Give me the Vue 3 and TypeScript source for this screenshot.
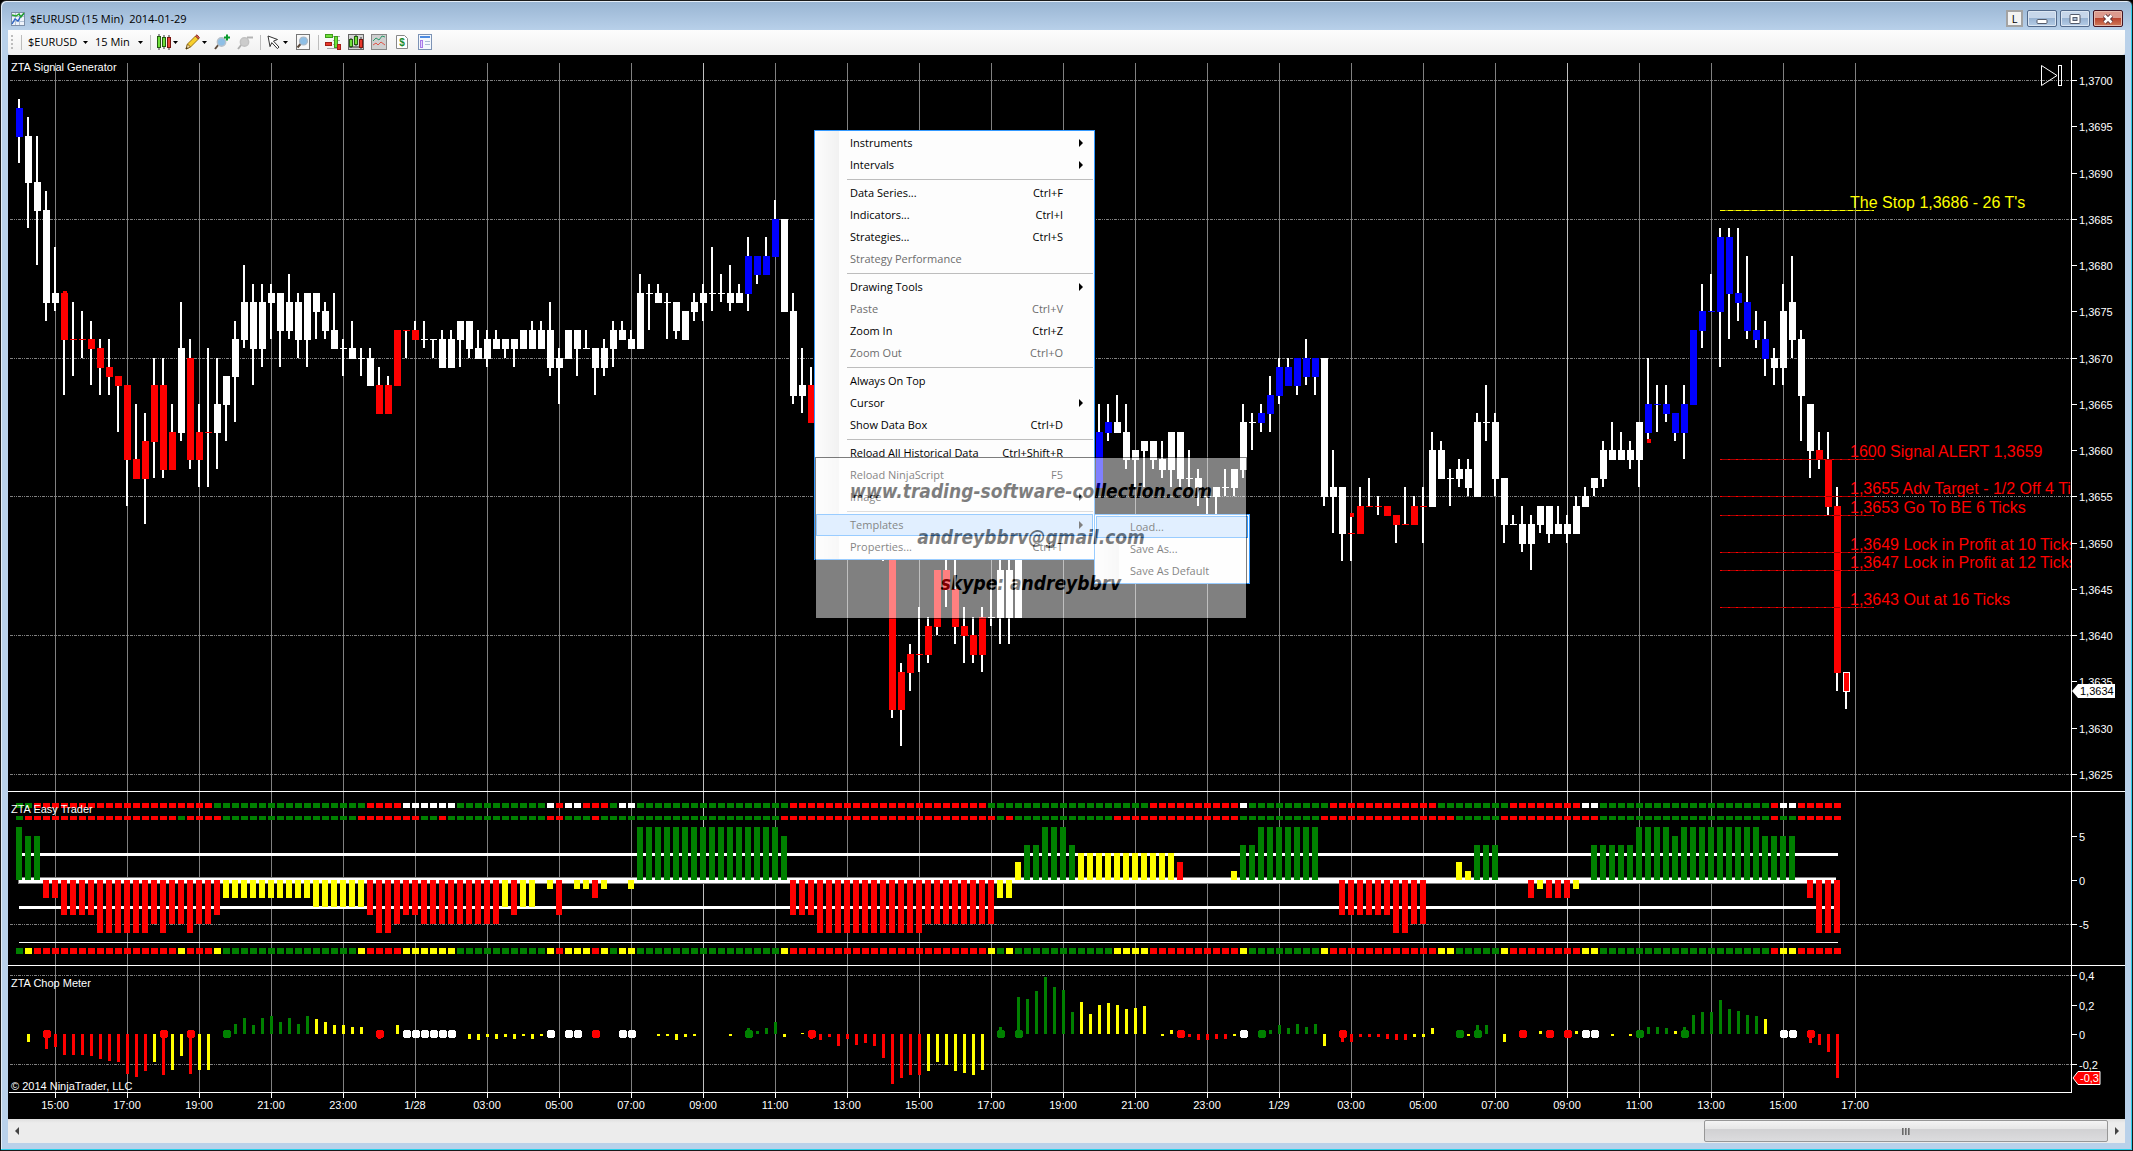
<script setup lang="ts">
import { ref } from 'vue'

type Tone = 'g' | 'r' | 'y' | 'w' | 'b'

interface Candle { x: number; tone: Tone; high: number; top: number; bottom: number; low: number }
interface Bar { x: number; tone: Tone; v: number; dot: boolean }
interface MenuItem { label: string; keys?: string; sub?: boolean; off?: boolean; hot?: boolean; id?: string }

const PITCH = 9
const priceY = (ticks: number): number => Math.round(80 + ticks * 9.25)

/* colour, high, body top, body bottom, low, counted in ticks below 1,3700; "@n" jumps to bar n */
const candleSource = `
b 2 3 6 9|w 4 6 11 16|w 6 11 14 20|w 12 14 24 26|w 18 23 24 25|r 23 23 28 34|r 24 28 28 32|r 25 28 28 30|
r 26 28 29 33|r 28 29 31 34|r 28 31 32 34|r 32 32 33 38|r 33 33 41 46|r 35 41 43 43|r 36 39 43 48|r 30 33 39 43|
r 30 33 42 43|r 35 38 42 42|w 24 29 38 39|r 28 30 41 42|r 35 38 41 44|r 29 38 38 44|w 30 35 38 42|w 32 32 35 39|
w 26 28 32 37|w 20 24 28 29|w 22 24 29 33|w 22 24 29 31|w 22 23 24 28|w 23 23 27 31|w 21 24 27 28|w 23 24 28 30|
w 23 23 28 31|w 23 23 25 28|w 24 25 27 28|w 23 27 29 29|w 28 29 29 32|w 26 29 30 30|w 29 30 30 32|w 29 30 33 33|
r 31 33 36 36|r 32 33 36 36|r 27 27 33 33|r 27 27 27 30|r 26 27 28 28|w 26 28 28 29|w 28 28 28 30|w 27 28 31 31|
w 27 28 31 31|w 26 26 28 31|w 26 26 29 30|w 27 29 30 30|w 27 28 30 31|w 27 28 29 29|w 28 28 29 30|w 28 28 29 31|
w 27 27 29 29|w 26 27 29 29|w 26 27 29 29|w 24 27 31 32|w 29 30 31 35|w 27 27 30 30|w 27 27 29 32|w 27 29 29 29|
w 29 29 31 34|w 28 29 31 32|w 26 27 29 31|w 26 27 28 28|w 27 28 29 29|w 21 23 29 29|w 22 23 23 27|w 22 23 24 24|
w 23 24 24 28|w 24 24 27 28|w 25 25 28 28|w 23 24 25 26|w 22 23 24 26|w 18 23 23 25|w 21 23 23 24|w 20 23 24 25|
w 22 23 24 24|b 17 19 23 25|b 19 19 21 22|b 17 19 21 21|b 13 15 19 19|w 15 15 25 25|w 23 25 34 35|w 29 33 34 36|
r 31 33 37 37|@96|w 50 50 50 52|r 48 48 68 69|r 63 64 68 72|r 61 62 64 66|r 57 62 62 64|r 58 59 62 63|
r 53 53 59 60|r 50 53 55 57|r 50 55 59 61|r 57 59 60 63|r 58 60 62 63|r 57 58 62 64|w 55 58 58 59|w 50 53 58 61|
w 50 53 58 61|w 48 48 58 58|@120|b 35 38 44 44|b 35 37 38 39|w 34 37 38 38|w 35 38 41 42|w 40 40 41 44|
w 39 39 40 44|w 39 39 41 42|w 39 41 42 43|w 38 38 42 44|w 38 38 43 44|w 40 43 43 44|w 42 43 44 46|w 45 45 45 48|
w 44 44 45 48|w 42 44 44 45|w 42 42 44 45|w 35 37 42 43|w 36 37 37 40|b 35 36 37 38|b 32 34 36 38|b 30 31 34 35|
b 30 31 33 33|b 30 30 33 34|b 28 30 32 33|b 30 30 32 34|w 30 30 45 46|w 40 44 45 49|w 44 44 49 52|r 47 49 49 52|
r 44 46 49 49|r 43 46 46 46|r 45 46 46 47|r 46 46 47 47|r 47 47 48 50|r 44 48 48 48|r 45 46 48 48|r 44 46 46 50|
w 38 40 46 46|w 39 40 43 43|w 42 43 43 46|w 41 42 43 44|w 41 42 44 45|w 36 37 45 45|w 33 37 37 39|w 36 37 43 45|
w 43 43 48 50|w 47 48 48 48|w 46 48 50 51|w 47 48 50 53|w 46 46 48 49|w 46 46 49 50|w 46 48 49 49|w 47 48 49 50|
w 45 46 49 49|w 44 45 46 46|w 43 43 44 45|w 39 40 43 44|w 37 40 41 41|w 38 40 41 41|w 39 40 41 42|w 37 37 41 44|
b 30 35 38 39|b 33 35 35 38|b 33 35 36 37|b 36 36 38 39|b 33 35 38 41|b 27 27 35 35|b 22 25 27 29|b 21 25 25 25|
b 16 17 25 31|b 16 17 23 28|b 16 23 24 26|b 19 24 27 28|b 25 27 28 29|b 26 28 30 32|w 29 30 31 33|w 22 25 31 33|
w 19 24 28 30|w 27 28 34 39|w 35 35 40 43|r 38 40 41 42|r 38 41 46 47|r 44 46 64 66|r 64 64 66 68`

function walk(source: string, each: (entry: string[], index: number) => void): void {
  let i = 0
  for (const raw of source.split('|')) {
    const entry = raw.trim()
    if (!entry) continue
    if (entry.startsWith('@')) { i = Number(entry.slice(1)); continue }
    each(entry.split(' '), i)
    i++
  }
}

const candles: Candle[] = []
walk(candleSource, (e, i) => {
  const [high, top, bottom, low] = e.slice(1).map(n => priceY(Number(n)))
  candles.push({ x: 19 + PITCH * i, tone: e[0] as Tone, high, top, bottom, low })
})
const lastCandle = candles[candles.length - 1]

const markers = [{ x: 63, y: 291 }, { x: 1350, y: 513 }, { x: 1647, y: 439 }]

/* run-length rows: tone followed by count */
function runs(source: string): { x: number; tone: Tone }[] {
  const out: { x: number; tone: Tone }[] = []
  for (const part of source.split(' ')) {
    const count = Number(part.slice(1))
    for (let k = 0; k < count; k++) out.push({ x: 16 + PITCH * out.length, tone: part[0] as Tone })
  }
  return out
}
const strips = [
  { y: 803, h: 5, cells: runs('g2 r20 g17 r4 w6 g10 w1 r1 w2 r3 g1 w2 g17 r22 g18 r10 w1 g9 r12 g8 r8 w2 g19 r1 w2 r5') },
  { y: 816, h: 4, cells: runs('g1 r17 g1 r4 g15 r7 g2 r1 g11 r2 g3 r1 g20 r24 g1 r1 g11 r14 g9 r15 g5 r11 g19 r1 g2 r5') },
  { y: 948, h: 6, cells: runs('g1 y1 r16 y1 r3 y1 g15 y1 r4 y6 g10 y1 r1 y3 r1 y1 g1 y2 g16 y1 r22 y1 g1 y1 g11 y4 r10 y1 g8 y1 r12 y2 g5 y1 r8 y2 g19 r1 y2 r5') },
]

/* first bar, tone, value, repeat */
const trendRuns: [number, Tone, number, number][] = [
  [0, 'g', 6, 1], [1, 'g', 5, 2], [3, 'r', -2, 2], [5, 'r', -4, 4], [9, 'r', -6, 6], [15, 'r', -5, 1], [16, 'r', -6, 1],
  [17, 'r', -5, 2], [19, 'r', -6, 1], [20, 'r', -5, 2], [22, 'r', -4, 1], [23, 'y', -2, 10], [33, 'y', -3, 6],
  [39, 'r', -4, 1], [40, 'r', -6, 2], [42, 'r', -5, 1], [43, 'r', -4, 2], [45, 'r', -5, 9], [54, 'y', -3, 1],
  [55, 'r', -4, 1], [56, 'y', -3, 2], [59, 'y', -1, 1], [60, 'r', -4, 1], [62, 'y', -1, 2], [64, 'r', -2, 1],
  [65, 'y', -1, 1], [68, 'y', -1, 1], [69, 'g', 6, 16], [85, 'g', 5, 1], [86, 'r', -4, 3], [89, 'r', -6, 12],
  [101, 'r', -5, 8], [109, 'y', -2, 2], [111, 'y', 2, 1], [112, 'g', 4, 2], [114, 'g', 6, 3], [117, 'g', 4, 1],
  [118, 'y', 3, 11], [129, 'r', 2, 1], [135, 'y', 1, 1], [136, 'g', 4, 2], [138, 'g', 6, 7], [147, 'r', -4, 6],
  [153, 'r', -6, 2], [155, 'r', -5, 2], [160, 'y', 2, 1], [161, 'y', 1, 1], [162, 'g', 4, 3], [168, 'r', -2, 1],
  [169, 'y', -1, 1], [170, 'r', -2, 3], [173, 'y', -1, 1], [175, 'g', 4, 5], [180, 'g', 6, 4], [184, 'g', 5, 1],
  [185, 'g', 6, 9], [194, 'g', 5, 4], [199, 'r', -2, 1], [200, 'r', -6, 3],
]
const trendBars = trendRuns.flatMap(([from, tone, v, n]) =>
  Array.from({ length: n }, (_, k) => {
    const h = Math.round(Math.abs(v) * 8.85)
    return { x: 16 + PITCH * (from + k), tone, y: v > 0 ? 880 - h : 880, h }
  }),
)

/* tone and height of each chop bar; a trailing "o" puts a dot on the zero line */
const chopSource = `@1|y -8|@3|r -15 o|r -13|r -21|r -21|r -21|r -22|r -25|r -27|r -28|r -40|r -43|r -37|y -28|r -41 o|y -36|y -22|
r -40 o|y -36|y -36|@23|g 0 o|g 10|g 16|g 9|g 16|g 18|g 12|g 16|g 10|g 18|y 15|y 12|y 9|y 9|y 7|y 7|@40|r -5 o|@42|y 9|
w 0 o|w 0 o|w 0 o|w 0 o|w 0 o|w 0 o|@50|y -5|y -6|y -3|y -5|y -3|y -5|y -2|y -5|y -2|w 0 o|@61|w 0 o|w 0 o|@64|r 0 o|
@67|w 0 o|w 0 o|@71|y -2|y -2|y -6|y -3|y -2|@79|y -2|@81|g 6 o|g 3|g 6|g 12|y -3|@87|y 1|r -5 o|r -6|r -3|r -12|r -5|r -11|
r -9|r -12|r -24|r -50|r -44|r -41|r -41|y -37|y -28|y -31|y -37|y -39|y -41|y -36|@109|g 7 o|@111|g 37 o|g 35|g 43|g 57|
g 47|g 44|g 22|y 32|y 20|y 29|y 31|y 29|y 25|y 26|y 28|@127|y -2|y 4|r 0 o|r -3|r -6|r -6|r -5|r -5|y -2|w 0 o|@138|g 0 o|
g 4|g 9|g 6|g 10|g 7|g 10|y -12|@147|r -8 o|r -8|r -3|r -3|r -3|r -5|r -6|r -6|y -3|y -3|y 6|@160|g 0 o|y -2|g 9 o|g 9|
@165|y -8|@167|r 0 o|@169|y 3|r 0 o|@172|r 0 o|y 3|w 0 o|w 0 o|@177|y -2|@179|y -2|g 0 o|g 7|g 7|g 6|y 3|g 7 o|g 19|g 22|
g 22|g 34|g 25|g 23|g 19|g 18|y 15|@196|w 0 o|w 0 o|@199|r -9 o|r -11|r -18|r -44`
const chopBars: Bar[] = []
walk(chopSource, (e, i) => {
  chopBars.push({ x: 18 + PITCH * i, tone: e[0] as Tone, v: Number(e[1]), dot: e[2] === 'o' })
})

const hours = ['15:00', '17:00', '19:00', '21:00', '23:00', '1/28', '03:00', '05:00', '07:00', '09:00', '11:00', '13:00',
  '15:00', '17:00', '19:00', '21:00', '23:00', '1/29', '03:00', '05:00', '07:00', '09:00', '11:00', '13:00', '15:00', '17:00']
  .map((text, k) => ({ text, x: 55 + 72 * k, bright: text === '09:00' }))

const prices = Array.from({ length: 16 }, (_, k) => ({ text: `1,${3700 - 5 * k}`, y: priceY(5 * k), line: k % 3 === 0 }))
const scales = [
  { text: '5', y: 836 }, { text: '0', y: 880 }, { text: '-5', y: 924, line: true },
  { text: '0,4', y: 975, line: true }, { text: '0,2', y: 1005 }, { text: '0', y: 1034 }, { text: '-0,2', y: 1064, line: true },
]

const alerts = [
  { text: "The Stop 1,3686 - 26 T's", y: 210, tone: 'y' },
  { text: '1600 Signal ALERT 1,3659', y: 459, tone: 'r' },
  { text: '1,3655 Adv Target - 1/2 Off 4 Ticks', y: 496, tone: 'r' },
  { text: '1,3653 Go To BE 6 Ticks', y: 515, tone: 'r' },
  { text: '1,3649 Lock in Profit at 10 Ticks', y: 552, tone: 'r' },
  { text: '1,3647 Lock in Profit at 12 Ticks', y: 570, tone: 'r' },
  { text: '1,3643 Out at 16 Ticks', y: 607, tone: 'r' },
]

const menu: MenuItem[][] = [
  [{ label: 'Instruments', sub: true }, { label: 'Intervals', sub: true }],
  [{ label: 'Data Series...', keys: 'Ctrl+F' }, { label: 'Indicators...', keys: 'Ctrl+I' },
    { label: 'Strategies...', keys: 'Ctrl+S' }, { label: 'Strategy Performance', off: true }],
  [{ label: 'Drawing Tools', sub: true }, { label: 'Paste', keys: 'Ctrl+V', off: true },
    { label: 'Zoom In', keys: 'Ctrl+Z' }, { label: 'Zoom Out', keys: 'Ctrl+O', off: true }],
  [{ label: 'Always On Top' }, { label: 'Cursor', sub: true }, { label: 'Show Data Box', keys: 'Ctrl+D' }],
  [{ label: 'Reload All Historical Data', keys: 'Ctrl+Shift+R' }, { label: 'Reload NinjaScript', keys: 'F5' },
    { label: 'Image', sub: true }],
  [{ label: 'Templates', sub: true, hot: true }, { label: 'Properties...', keys: 'Ctrl+T' }],
]
const templateMenu: MenuItem[] = [{ label: 'Load...', hot: true }, { label: 'Save As...' }, { label: 'Save As Default' }]

const instrument = ref('$EURUSD')
const interval = ref('15 Min')
</script>

<template>
  <div class="window">
    <header class="titlebar">
      <svg class="app-icon" width="14" height="14" viewBox="0 0 14 14">
        <rect x="0.5" y="0.5" width="13" height="13" fill="#eef3fa" stroke="#7d8fa8" />
        <path d="M4.5 1v12M8.5 1v12M1 4.5h12M1 9.5h12" stroke="#b3c3d8" fill="none" />
        <path d="M1 12l3-5 3 2 3-5 3-2" stroke="#2a62c4" stroke-width="1.4" fill="none" />
        <path d="M1 3l4 1 3-2 2 3 3-4" stroke="#27a32b" stroke-width="1.4" fill="none" />
      </svg>
      <h1>$EURUSD (15 Min)&nbsp; 2014-01-29</h1>
      <button class="link-btn" type="button">L</button>
      <button class="win-btn" type="button" aria-label="Minimize">
        <svg width="12" height="12" viewBox="0 0 12 12"><rect x="1" y="6.5" width="10" height="4" rx="1" fill="#fff" stroke="#545b6b" /></svg>
      </button>
      <button class="win-btn" type="button" aria-label="Restore">
        <svg width="12" height="12" viewBox="0 0 12 12">
          <rect x="1" y="1.5" width="10" height="9" rx="1" fill="#fff" stroke="#545b6b" />
          <rect x="4" y="4.5" width="4" height="3" fill="#a9bdd6" stroke="#545b6b" />
        </svg>
      </button>
      <button class="win-btn close" type="button" aria-label="Close">
        <svg width="12" height="12" viewBox="0 0 12 12">
          <path d="M2.5 2.5l7 7M9.5 2.5l-7 7" stroke="#563036" stroke-width="4.5" />
          <path d="M2.5 2.5l7 7M9.5 2.5l-7 7" stroke="#fff" stroke-width="2.6" />
        </svg>
      </button>
    </header>

    <div class="toolbar" role="toolbar">
      <span class="grip"><i v-for="n in 4" :key="n"></i></span>
      <span class="sep"></span>
      <label class="drop wide">
        <select v-model="instrument" aria-label="Instrument"><option>$EURUSD</option></select>
        <svg width="5" height="3" viewBox="0 0 5 3"><path d="M0 0h5L2.5 3z" /></svg>
      </label>
      <label class="drop narrow">
        <select v-model="interval" aria-label="Interval"><option>15 Min</option></select>
        <svg width="5" height="3" viewBox="0 0 5 3"><path d="M0 0h5L2.5 3z" /></svg>
      </label>
      <span class="sep"></span>
      <button class="tool" type="button" aria-label="Chart style">
        <svg width="14" height="16" viewBox="0 0 14 16">
          <path d="M2 0v16M7 1v14M12 1v15" stroke="#333" />
          <rect x="0.5" y="2.5" width="3" height="11" fill="#6fe03a" stroke="#245c12" />
          <rect x="5.5" y="3.5" width="3" height="9" fill="#6fe03a" stroke="#245c12" />
          <rect x="10.5" y="3.5" width="3" height="10" fill="#e8473a" stroke="#7a1610" />
        </svg>
        <svg width="5" height="3" viewBox="0 0 5 3"><path d="M0 0h5L2.5 3z" /></svg>
      </button>
      <button class="tool" type="button" aria-label="Drawing tools">
        <svg width="15" height="16" viewBox="0 0 15 16">
          <path d="M1 15l1.5-5L10.5 2l3 3-8 8z" fill="#f8cf2c" stroke="#9a7414" />
          <path d="M10.5 2l1.5-1.2L14.3 3.5 13.5 5z" fill="#e5604d" stroke="#8d372b" />
          <path d="M1 15l1.5-5 3 3z" fill="#f2dcae" stroke="#8b6a22" />
          <path d="M1 15l.6-2 1.3 1.3z" fill="#222" />
        </svg>
        <svg width="5" height="3" viewBox="0 0 5 3"><path d="M0 0h5L2.5 3z" /></svg>
      </button>
      <button class="tool" type="button" aria-label="Zoom in">
        <svg width="16" height="16" viewBox="0 0 16 16">
          <path d="M1 15l4-5" stroke="#5b4a3c" stroke-width="2" />
          <circle cx="7.5" cy="8" r="4.2" fill="#8ebfe6" stroke="#b6c0ca" stroke-width="1.4" />
          <path d="M13 0.5v6M10 3.5h6" stroke="#0a9a2c" stroke-width="2" />
        </svg>
      </button>
      <button class="tool" type="button" aria-label="Zoom out">
        <svg width="16" height="16" viewBox="0 0 16 16">
          <path d="M1 15l4-5" stroke="#b0b0b0" stroke-width="2" />
          <circle cx="7.5" cy="8" r="4.2" fill="#cccccc" stroke="#c2c2c2" stroke-width="1.4" />
          <path d="M10 3.5h6" stroke="#b4b4b4" stroke-width="2" />
        </svg>
      </button>
      <span class="sep"></span>
      <button class="tool" type="button" aria-label="Cursor">
        <svg width="14" height="16" viewBox="0 0 14 16">
          <path d="M1 2l9.5 3.5-4 1.6 5.5 6-1.6 1.5-5.6-6-1.8 4z" fill="#fff" stroke="#333" />
        </svg>
        <svg width="5" height="3" viewBox="0 0 5 3"><path d="M0 0h5L2.5 3z" /></svg>
      </button>
      <button class="tool" type="button" aria-label="Zoom frame">
        <svg width="16" height="16" viewBox="0 0 16 16">
          <rect x="1.5" y="0.5" width="13" height="15" fill="#f8f8f8" stroke="#777" />
          <path d="M2.5 13.5l3.5-4" stroke="#5b4a3c" stroke-width="2" />
          <circle cx="8.5" cy="7" r="4" fill="#8ebfe6" stroke="#aab8c6" stroke-width="1.2" />
        </svg>
      </button>
      <span class="sep"></span>
      <button class="tool" type="button" aria-label="Chart trader">
        <svg width="16" height="16" viewBox="0 0 16 16">
          <path d="M8 2.5h7M8 6.5h7M8 10.5h8M2 14.5h14" stroke="#aaa" />
          <rect x="0.5" y="0.5" width="7" height="3" fill="#6fe03a" stroke="#3f9a1d" />
          <rect x="0.5" y="8.5" width="6" height="3" fill="#e8372a" stroke="#a31f16" />
          <rect x="9.5" y="2.5" width="3" height="11" fill="#6fe03a" stroke="#3f9a1d" />
          <rect x="12.5" y="10.5" width="3" height="5" fill="#e8372a" stroke="#a31f16" />
        </svg>
      </button>
      <button class="tool" type="button" aria-label="Data series">
        <svg width="16" height="16" viewBox="0 0 16 16">
          <rect x="0.5" y="0.5" width="15" height="15" fill="#d4d4d4" stroke="#666" />
          <path d="M3 4v10M8 1v11M13 3v12M1 13h14" stroke="#333" />
          <rect x="1.5" y="5.5" width="3" height="7" fill="#6fe03a" stroke="#245c12" />
          <rect x="6.5" y="2.5" width="3" height="8" fill="#6fe03a" stroke="#245c12" />
          <rect x="11.5" y="5.5" width="3" height="8" fill="#e8372a" stroke="#7a1610" />
        </svg>
      </button>
      <button class="tool" type="button" aria-label="Indicators">
        <svg width="16" height="16" viewBox="0 0 16 16">
          <rect x="0.5" y="0.5" width="15" height="15" fill="#cfcfcf" stroke="#888" />
          <path d="M2 7l3-3 3 2 3-4 3 1" stroke="#2b9a6a" fill="none" />
          <path d="M2 11l3-2 2 2 3-3 4 3" stroke="#e0564a" fill="none" />
        </svg>
      </button>
      <button class="tool" type="button" aria-label="Strategies">
        <svg width="16" height="16" viewBox="0 0 16 16">
          <path d="M2.5 1.5h8l3 3v10h-11z" fill="#fff" stroke="#888" />
          <text x="8" y="12" text-anchor="middle" class="dollar">$</text>
        </svg>
      </button>
      <button class="tool" type="button" aria-label="Properties">
        <svg width="16" height="16" viewBox="0 0 16 16">
          <rect x="1.5" y="0.5" width="13" height="15" fill="#f4f8fd" stroke="#7c93b5" />
          <rect x="3" y="2" width="10" height="2" fill="#4d8be0" />
          <rect x="3.5" y="6.5" width="2" height="7" fill="#e3d2fb" stroke="#a77be8" />
          <path d="M8 7.5h5M8 10.5h5" stroke="#a9bdd6" />
        </svg>
      </button>
    </div>

    <main class="chart">
      <svg class="plot" viewBox="8 55 2117 1064" shape-rendering="crispEdges">
        <defs>
          <clipPath id="plot-area"><rect x="8" y="55" width="2063" height="1038" /></clipPath>
        </defs>

        <g class="grid">
          <rect v-for="h in hours" :key="h.x" :x="h.x" y="63" width="1" height="1029" :class="{ bright: h.bright }" />
          <template v-for="p in prices" :key="p.text">
            <path v-if="p.line" class="dash" :d="`M10 ${p.y}.5H2071`" />
          </template>
          <template v-for="s in scales" :key="s.y">
            <path v-if="s.line" class="dash" :d="`M10 ${s.y}.5H2071`" />
          </template>
        </g>

        <g class="candles">
          <g v-for="c in candles" :key="c.x" :class="c.tone">
            <rect class="wick" :x="c.x - 1" :y="c.high" width="2" :height="c.low - c.high" />
            <rect :x="c.x - 3" :y="c.top" width="7" :height="c.bottom - c.top + 1" />
          </g>
          <rect :x="lastCandle.x - 3 + 0.5" :y="lastCandle.top + 0.5" width="6" :height="lastCandle.bottom - lastCandle.top" class="open-bar" />
          <rect v-for="m in markers" :key="m.x" class="r" :x="m.x" :y="m.y" width="4" height="4" />
        </g>

        <g clip-path="url(#plot-area)">
          <g v-for="a in alerts" :key="a.y" :class="['alert', a.tone]">
            <path class="base" :d="`M1720 ${a.y}.5H1874`" />
            <path class="spots" :d="`M1720 ${a.y}.5H1874`" />
            <text x="1850" :y="a.y - 2">{{ a.text }}</text>
          </g>
        </g>

        <g class="levels">
          <rect x="19" y="853" width="1819" height="3" />
          <rect class="edge" x="18" y="877" width="1818" height="7" />
          <rect x="19" y="878" width="1817" height="5" />
          <rect x="19" y="906" width="1819" height="3" />
          <rect x="19" y="942" width="1819" height="1" />
        </g>
        <g v-for="s in strips" :key="s.y">
          <rect v-for="c in s.cells" :key="c.x" :class="c.tone" :x="c.x" :y="s.y" width="7" :height="s.h" />
        </g>
        <rect v-for="b in trendBars" :key="b.x" :class="b.tone" :x="b.x" :y="b.y" width="6" :height="b.h" />

        <g v-for="b in chopBars" :key="b.x" :class="b.tone">
          <rect :x="b.x" :y="b.v > 0 ? 1034 - b.v : 1034" width="3" :height="Math.abs(b.v)" />
          <path v-if="b.dot" :d="`M${b.x - 1} 1030h6v1h1v6h-1v1h-6v-1h-1v-6h1z`" />
        </g>

        <g class="w">
          <rect x="2071" y="60" width="1" height="1033" />
          <rect x="8" y="791" width="2117" height="1" />
          <rect x="8" y="965" width="2117" height="1" />
          <rect x="9" y="1092" width="2063" height="1" />
          <rect v-for="p in prices" :key="p.y" x="2072" :y="p.y" width="5" height="1" />
          <rect v-for="s in scales" :key="s.y" x="2072" :y="s.y" width="5" height="1" />
          <rect v-for="h in hours" :key="h.x" :x="h.x" y="1093" width="1" height="5" />
        </g>

        <g class="labels">
          <text v-for="p in prices" :key="p.y" x="2079" :y="p.y + 5">{{ p.text }}</text>
          <text v-for="s in scales" :key="s.y" x="2079" :y="s.y + 5">{{ s.text }}</text>
          <text v-for="h in hours" :key="h.x" class="mid" :x="h.x" y="1109">{{ h.text }}</text>
          <text x="11" y="71">ZTA Signal Generator</text>
          <text x="11" y="813">ZTA Easy Trader</text>
          <text x="11" y="987">ZTA Chop Meter</text>
          <text x="11" y="1090">© 2014 NinjaTrader, LLC</text>
        </g>

        <g class="tags" shape-rendering="auto">
          <path d="M2072 691l6-7h37v14h-37z" fill="#fff" />
          <text x="2080" y="695" fill="#000">1,3634</text>
          <path d="M2073 1078l5-6.5h22v13h-22z" fill="#f00" stroke="#fff" />
          <text x="2080" y="1082" fill="#fff">-0,3</text>
          <path d="M2041.5 65.5l15.5 10-15.5 10z" fill="none" stroke="#fff" />
          <rect x="2058.5" y="65.5" width="3" height="20" fill="none" stroke="#fff" />
        </g>
      </svg>

      <ul class="menu main-menu" role="menu">
        <template v-for="(group, g) in menu" :key="g">
          <li v-if="g > 0" class="rule" role="separator"></li>
          <li v-for="item in group" :key="item.label" role="none">
            <button type="button" role="menuitem" :class="{ off: item.off, hot: item.hot }">
              <span>{{ item.label }}</span>
              <kbd v-if="item.keys">{{ item.keys }}</kbd>
              <svg v-if="item.sub" class="arrow" width="4" height="8" viewBox="0 0 4 8"><path d="M0 0l4 4-4 4z" /></svg>
            </button>
          </li>
        </template>
      </ul>

      <ul class="menu sub-menu" role="menu">
        <li v-for="item in templateMenu" :key="item.label" role="none">
          <button type="button" role="menuitem" :class="{ hot: item.hot }"><span>{{ item.label }}</span></button>
        </li>
      </ul>

      <div class="watermark">
        <p>www.trading-software-collection.com</p>
        <p>andreybbrv@gmail.com</p>
        <p>skype: andreybbrv</p>
      </div>
    </main>

    <div class="scrollbar">
      <button type="button" aria-label="Scroll left"><svg width="4" height="8" viewBox="0 0 4 8"><path d="M4 0v8L0 4z" /></svg></button>
      <div class="track"><div class="thumb"><i></i><i></i><i></i></div></div>
      <button type="button" aria-label="Scroll right"><svg width="4" height="8" viewBox="0 0 4 8"><path d="M0 0l4 4-4 4z" /></svg></button>
    </div>
  </div>
</template>

<style>
body {
  margin: 0;
  background: #000;
}
</style>

<style scoped>
.window {
  box-sizing: border-box;
  padding: 0 7px 7px;
  border: 1px solid #1a1a1a;
  border-radius: 6px 6px 0 0;
  background: linear-gradient(#98b4d2, #b9d1ea 30px);
  box-shadow: inset -1px -1px #2ad0ea, inset 1px 1px #e4edf7;
  font-family: "Open Sans", "Noto Sans", sans-serif;
  font-size: 11px;
  color: #000;
}
button, select {
  margin: 0;
  padding: 0;
  border: 0;
  background: none;
  font: inherit;
  color: inherit;
}
svg {
  display: block;
  flex: none;
}

.titlebar {
  display: flex;
  align-items: center;
  gap: 3px;
  height: 29px;
  padding: 6px 2px 0 3px;
  box-sizing: border-box;
}
h1 {
  margin: 0 auto 0 2px;
  font-size: 11px;
  font-weight: 400;
  line-height: 16px;
}
.link-btn {
  box-sizing: border-box;
  width: 17px;
  height: 17px;
  margin-right: 1px;
  border: 2px solid #a3a3a3;
  background: #f3f3f3;
  line-height: 13px;
}
.win-btn {
  display: flex;
  align-items: center;
  justify-content: center;
  box-sizing: border-box;
  width: 30px;
  height: 17px;
  border: 1px solid #52698a;
  border-radius: 2px;
  background: linear-gradient(#c6d6ea 45%, #96b1d1 46%, #b5cde6);
  box-shadow: inset 0 0 0 1px #dbe6f2;
}
.win-btn.close {
  border-color: #431422;
  background: linear-gradient(#dd9a8d 45%, #b8402b 46%, #d07b5a);
  box-shadow: inset 0 0 0 1px #e6b9ac;
}

.toolbar {
  display: flex;
  align-items: center;
  gap: 7px;
  box-sizing: border-box;
  height: 25px;
  padding: 0 0 1px 3px;
  border-radius: 0 0 3px 3px;
  background: linear-gradient(#fdfdfd, #f0f0f0);
}
.grip {
  display: flex;
  flex-direction: column;
  gap: 2px;
  width: 3px;
}
.grip i {
  width: 2px;
  height: 2px;
  background: #bdbdbd;
}
.sep {
  width: 1px;
  height: 15px;
  margin-right: -1px;
  background: #bdbdbd;
}
.drop {
  display: flex;
  align-items: center;
  justify-content: space-between;
}
.drop.wide { width: 60px; }
.drop.narrow { width: 48px; }
.drop select {
  appearance: none;
  line-height: 16px;
}
.tool {
  display: flex;
  align-items: center;
  gap: 2px;
}

.chart {
  position: relative;
  background: #000;
}
.plot {
  width: 100%;
  height: auto;
}
.g { fill: #008000; }
.r { fill: #f00; }
.y { fill: #ff0; }
.w { fill: #fff; }
.b { fill: #00f; }
.grid rect { fill: #808080; }
.grid .bright { fill: #c0c0c0; }
.dash {
  stroke: #808080;
  stroke-dasharray: 3 1 1 1 1 1;
}
.wick { fill: #fff; }
.open-bar {
  fill: none;
  stroke: #fff;
}
.alert text {
  font: 16px "Liberation Sans", Arial, sans-serif;
}
.alert path { fill: none; }
.alert.r .base { stroke: #a00000; }
.alert.r .spots { stroke: #f00; }
.alert.y .base { stroke: #a0a000; }
.alert.y .spots { stroke: #ff0; }
.spots { stroke-dasharray: 2 6; }
.alert.y .spots { stroke-dasharray: 5 3; }
.levels rect { fill: #fff; }
.levels .edge { fill: #808080; }
.labels text, .tags text {
  font: 11px "Liberation Sans", Arial, sans-serif;
}
.labels text { fill: #fff; }
.labels .mid { text-anchor: middle; }
.dollar {
  font: bold 10px "Liberation Sans", Arial, sans-serif;
  fill: #1c8a2e;
}

.menu {
  position: absolute;
  box-sizing: border-box;
  margin: 0;
  padding: 1px;
  border: 1px solid #39f;
  background: linear-gradient(90deg, #fdfdfd, #f1f1f1 24px, #fdfdfd 24px);
  list-style: none;
}
.main-menu {
  left: 806px;
  top: 75px;
  width: 281px;
}
.sub-menu {
  left: 1086px;
  top: 459px;
  width: 156px;
}
.menu button {
  display: flex;
  align-items: center;
  position: relative;
  box-sizing: border-box;
  width: 100%;
  height: 22px;
  padding: 0 29px 0 33px;
  border: 1px solid transparent;
  line-height: 20px;
}
.menu kbd {
  margin-left: auto;
  font: inherit;
}
.menu .off { color: #6d6d6d; }
.menu .hot {
  border-color: #39f;
  background: #c3e0ff;
}
.arrow {
  position: absolute;
  right: 9px;
  top: 6px;
}
.rule {
  height: 1px;
  margin: 3px 0 2px 31px;
  background: #bdbdbd;
}

.watermark {
  position: absolute;
  left: 807px;
  top: 402px;
  box-sizing: border-box;
  width: 432px;
  padding: 10px 0 12px;
  border: 1px solid #000;
  background: #fff;
  opacity: 0.5;
  font: italic bold 19px/46px "DejaVu Sans Condensed", "DejaVu Sans", sans-serif;
  text-align: center;
}
.watermark p { margin: 0; }

.scrollbar {
  display: flex;
  height: 24px;
  background: linear-gradient(#dedede, #ececec 4px);
}
.scrollbar button {
  display: flex;
  align-items: center;
  justify-content: center;
  width: 17px;
}
.scrollbar path { fill: #444; }
.track {
  display: flex;
  flex: 1;
  padding: 1px 0;
}
.thumb {
  display: flex;
  align-items: center;
  justify-content: center;
  gap: 1px;
  box-sizing: border-box;
  width: 19.4%;
  margin-left: auto;
  border: 1px solid #979797;
  border-radius: 2px;
  background: linear-gradient(#f4f4f4, #e6e6e6 40%, #d1d1d3 41%, #dcdcde);
}
.thumb i {
  width: 2px;
  height: 7px;
  background: linear-gradient(90deg, #555, #aaa);
}
</style>
